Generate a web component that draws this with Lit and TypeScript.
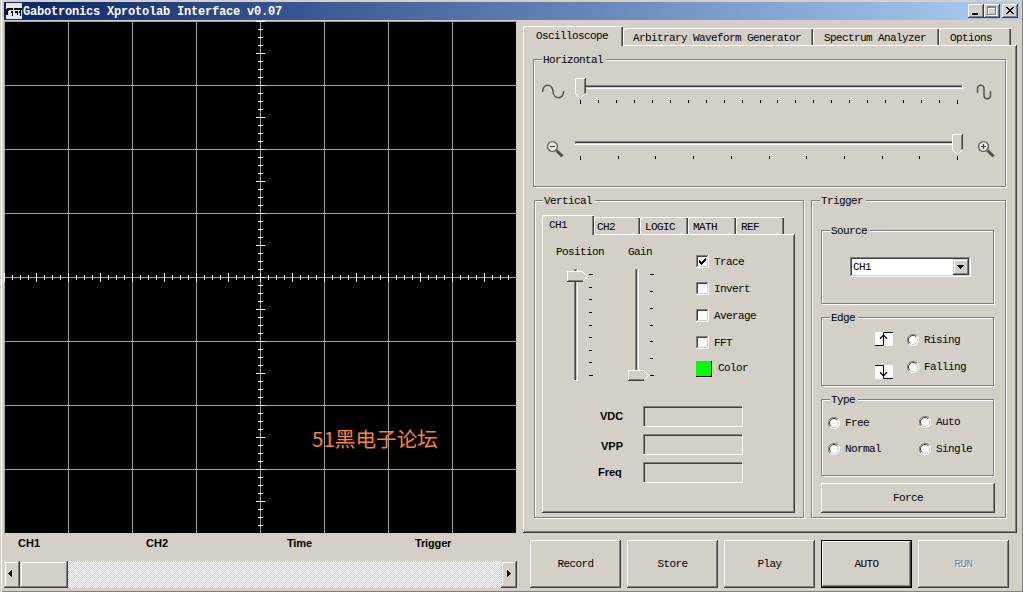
import { LitElement, html, svg, css } from "lit";
import { customElement, property } from "lit/decorators.js";
import { classMap } from "lit/directives/class-map.js";

const base = css`
  * {
    box-sizing: border-box;
  }
  svg {
    display: block;
    flex: none;
  }
  .raised {
    background: #d4d0c8;
    box-shadow: inset -1px -1px #404040, inset 1px 1px #fff, inset -2px -2px #808080;
  }
`;

/* Group box with an etched frame and a caption resting on its top edge. */
@customElement("group-box")
class GroupBox extends LitElement {
  @property() caption = "";
  static styles = css`
    :host {
      display: block;
      box-sizing: border-box;
      position: relative;
      border: 1px solid #808080;
      box-shadow: 1px 1px #fff, inset 1px 1px #fff;
    }
    .caption {
      position: absolute;
      top: -6px;
      left: 8px;
      padding: 0 3px 0 1px;
      background: #d4d0c8;
      line-height: 12px;
    }
  `;
  render() {
    return html`<span class="caption">${this.caption}</span><slot></slot>`;
  }
}

/* Trackbar, horizontal or vertical, with tick marks beside the groove. */
@customElement("track-bar")
class TrackBar extends LitElement {
  @property({ type: Boolean }) vertical = false;
  @property({ type: Number }) length = 388;
  @property({ type: Number }) ticks = 11;
  @property({ type: Number }) at = 0;
  static styles = css`
    :host {
      display: block;
      flex: none;
    }
    svg {
      display: block;
    }
  `;
  render() {
    const n = this.ticks - 1;
    const L = this.length;
    const marks = Array.from({ length: n + 1 }, (_, i) => {
      const end = i === 0 || i === n;
      const size = end ? 4 : 3;
      if (this.vertical) {
        const p = 6 + Math.round((i * (L - 12)) / n);
        return svg`<rect x=${end ? 22 : 22} y=${p} width=${size} height="1"></rect>`;
      }
      const p = 5 + Math.round((i * (L - 11)) / n);
      return svg`<rect x=${p} y="22" width="1" height=${size}></rect>`;
    });
    const t = Math.round(this.at * (L - 11));
    if (this.vertical) {
      return html`<svg width="27" height=${L} shape-rendering="crispEdges">
        <rect x="7" y="1" width="3" height="1" fill="#808080"></rect>
        <rect x="7" y="1" width="1" height=${L - 2} fill="#808080"></rect>
        <rect x="8" y="2" width="1" height=${L - 3} fill="#404040"></rect>
        <rect x="10" y="1" width="1" height=${L - 1} fill="#fff"></rect>
        <rect x="7" y=${L - 1} width="4" height="1" fill="#fff"></rect>
        <g>${marks}</g>
        <g transform="translate(0 ${t})">
          <path d="M0 0H16L21 5.500L16 11H0Z" fill="#d4d0c8"></path>
          <path d="M.5 10V.5H15.500L20.500 5.500L16 10" fill="none" stroke="#fff"></path>
          <path d="M1 9.500H16" stroke="#808080"></path>
          <path d="M0 10.500H16" stroke="#404040"></path>
        </g>
      </svg>`;
    }
    return html`<svg width=${L} height="27" shape-rendering="crispEdges">
      <rect x="0" y="7" width=${L - 1} height="1" fill="#808080"></rect>
      <rect x="0" y="8" width="1" height="2" fill="#808080"></rect>
      <rect x="1" y="8" width=${L - 2} height="1" fill="#404040"></rect>
      <rect x="0" y="10" width=${L} height="1" fill="#fff"></rect>
      <rect x=${L - 1} y="7" width="1" height="4" fill="#fff"></rect>
      <g>${marks}</g>
      <g transform="translate(${t} 0)">
        <path d="M0 0H11V16L5.500 21L0 16Z" fill="#d4d0c8"></path>
        <path d="M10 .5H.5V15.500L5.500 20.500L10 16" fill="none" stroke="#fff"></path>
        <path d="M9.500 1V16" stroke="#808080"></path>
        <path d="M10.500 0V15" stroke="#404040"></path>
      </g>
    </svg>`;
  }
}

@customElement("radio-option")
class RadioOption extends LitElement {
  static styles = [
    base,
    css`
      :host {
        display: flex;
        align-items: center;
        gap: 5px;
        height: 12px;
        line-height: 12px;
      }
    `,
  ];
  render() {
    return html`<svg width="12" height="12" viewBox="0 0 12 12">
        <circle cx="6" cy="6" r="5" fill="#fff"></circle>
        <path d="M2 10A5.500 5.500 0 0 1 10 2" fill="none" stroke="#808080"></path>
        <path d="M2.800 9.200A4.500 4.500 0 0 1 9.200 2.800" fill="none" stroke="#404040"></path>
        <path d="M2.800 9.200A4.500 4.500 0 0 0 9.200 2.800" fill="none" stroke="#d4d0c8"></path>
        <path d="M2 10A5.500 5.500 0 0 0 10 2" fill="none" stroke="#fff"></path></svg
      ><slot></slot>`;
  }
}

@customElement("check-option")
class CheckOption extends LitElement {
  @property({ type: Boolean }) checked = false;
  static styles = [
    base,
    css`
      :host {
        display: flex;
        align-items: center;
        gap: 5px;
        height: 13px;
        line-height: 12px;
      }
      .box {
        width: 13px;
        height: 13px;
        background: #fff;
        box-shadow: inset -1px -1px #fff, inset 1px 1px #808080, inset -2px -2px #d4d0c8,
          inset 2px 2px #404040;
      }
    `,
  ];
  render() {
    return html`<span class="box"
        >${this.checked
          ? html`<svg width="13" height="13" shape-rendering="crispEdges">
              <path
                d="M3 5h1v3h-1zM4 6h1v3h-1zM5 7h1v3h-1zM6 6h1v3h-1zM7 5h1v3h-1zM8 4h1v3h-1zM9 3h1v3h-1z"
              ></path>
            </svg>`
          : ""}</span
      ><slot></slot>`;
  }
}

/* Oscilloscope screen: 8 by 8 divisions of 64px with graduated centre axes. */
@customElement("scope-screen")
class ScopeScreen extends LitElement {
  static styles = css`
    :host {
      display: block;
      height: 513px;
    }
    svg {
      display: block;
    }
    .mark {
      font: 20.600px "Noto Sans CJK SC", sans-serif;
      letter-spacing: 0;
      fill: #f5853a;
    }
  `;
  render() {
    const grid = [];
    for (let i = 0; i < 8; i++) {
      grid.push(svg`<rect x=${i * 64} y="0" width="1" height="513"></rect>
        <rect x="0" y=${i * 64} width="513" height="1"></rect>`);
    }
    const ticks = [];
    for (let i = 0; i < 64; i++) {
      const r = i % 4 === 0 ? 4 : 2;
      ticks.push(svg`<rect x=${i * 8} y=${256 - r} width="1" height=${2 * r + 1}></rect>
        <rect x=${256 - r} y=${i * 8} width=${2 * r + 1} height="1"></rect>`);
    }
    return html`<svg width="513" height="513">
      <rect width="512" height="512"></rect>
      <g fill="#a0a0a0" shape-rendering="crispEdges">${grid}</g>
      <g fill="#fff" shape-rendering="crispEdges">${ticks}</g>
      <text class="mark" x="308" y="426">51黑电子论坛</text>
    </svg>`;
  }
}

@customElement("app-root")
class AppRoot extends LitElement {
  static styles = [
    base,
    css`
      :host {
        display: block;
        width: 1023px;
        height: 592px;
        overflow: hidden;
        background: #d4d0c8;
        color: #000;
        font: 11px/12px "Liberation Mono", monospace;
        letter-spacing: -0.600px;
        white-space: nowrap;
      }
      .window {
        height: 592px;
        padding: 2px 3px 0 4px;
        box-shadow: inset 1px 0 #d4d0c8, inset 2px 0 #fff, inset -1px -1px #808080;
      }
      .title {
        display: flex;
        align-items: center;
        height: 18px;
        padding: 0 2px;
        background: linear-gradient(90deg, #0a246a, #a6caf0 97%);
        color: #fff;
        font-size: 12px;
        font-weight: bold;
        letter-spacing: -0.200px;
      }
      .name {
        flex: 1;
        padding: 1px 0 0 1px;
      }
      .sys {
        width: 16px;
        height: 14px;
      }
      .close {
        margin-left: 2px;
      }
      .main {
        display: flex;
        gap: 6px;
      }
      .left {
        width: 513px;
        padding-top: 1px;
      }
      .labels {
        display: grid;
        grid-template-columns: repeat(4, 128px);
        padding-top: 3px;
        height: 27px;
      }
      .bold {
        font: bold 11px/12px "Liberation Sans", sans-serif;
        letter-spacing: 0;
      }
      .labels span {
        padding-left: 14px;
      }
      .labels .late {
        padding-left: 27px;
        letter-spacing: -0.150px;
      }
      .scroll {
        display: flex;
        justify-content: space-between;
        height: 27px;
        background: repeating-conic-gradient(#fff 0 25%, #d4d0c8 0 50%) 0 0 / 2px 2px;
      }
      .pair {
        display: flex;
      }
      .key {
        width: 16px;
        height: 27px;
        background: #d4d0c8;
        box-shadow: inset -1px -1px #404040, inset 1px 1px #d4d0c8, inset -2px -2px #808080,
          inset 2px 2px #fff;
      }
      .thumb {
        width: 48px;
      }
      .right {
        width: 494px;
        padding-top: 6px;
      }
      .tabs {
        display: flex;
        align-items: flex-end;
        height: 19px;
      }
      .tab {
        height: 17px;
        padding: 4px 0 0 10px;
        border-radius: 2px 0 0 0;
        background: #d4d0c8;
        box-shadow: inset 1px 1px #fff, inset -1px 0 #404040, inset -2px 0 #808080;
      }
      .tab:nth-child(n + 3) {
        padding-left: 11px;
      }
      .tab.on {
        position: relative;
        height: 20px;
        margin-bottom: -1px;
        padding: 4px 0 0 13px;
      }
      .panel {
        box-shadow: inset -1px -1px #404040, inset 1px 1px #fff, inset -2px -2px #808080;
      }
      .outer {
        height: 488px;
        padding: 14px 0 0 10px;
      }
      .horizontal {
        width: 473px;
        height: 128px;
        padding: 18px 0 0 8px;
      }
      .hrow {
        display: flex;
      }
      .hrow + .hrow {
        margin-top: 29px;
      }
      .hrow track-bar {
        margin: 0 13px 0 9px;
      }
      .groups {
        display: flex;
        gap: 7px;
        padding: 13px 0 0 1px;
      }
      .vertical {
        width: 270px;
        height: 318px;
        padding: 14px 0 0 7px;
      }
      .inner .tab {
        padding: 4px 0 0 5px;
      }
      .inner .tab.second {
        padding-left: 3px;
      }
      .inner .tab.on {
        padding: 4px 0 0 7px;
      }
      .channel {
        width: 253px;
        height: 279px;
        padding: 12px 0 0 14px;
      }
      .controls {
        display: flex;
      }
      .knob {
        display: flex;
        flex-direction: column;
        gap: 10px;
      }
      .position {
        width: 72px;
      }
      .position track-bar {
        margin-left: 11px;
      }
      .gain {
        width: 68px;
      }
      .checks {
        display: flex;
        flex-direction: column;
        gap: 14px;
        padding-top: 9px;
      }
      .colour {
        display: flex;
        gap: 6px;
        margin-top: -2px;
      }
      .colour span + span {
        padding-top: 1px;
      }
      .swatch {
        width: 16px;
        height: 16px;
        background: #00ff00;
        box-shadow: inset -1px -1px #000;
      }
      .readouts {
        display: grid;
        grid-template-columns: 45px 100px;
        row-gap: 7px;
        padding: 25px 0 0 42px;
      }
      .field {
        height: 21px;
        box-shadow: inset -1px -1px #fff, inset 1px 1px #808080, inset 2px 2px #404040;
      }
      .readouts .bold {
        padding: 4px 0 0 2px;
      }
      .readouts .vpp {
        padding: 6px 0 0 3px;
      }
      .readouts .freq {
        padding-left: 0;
      }
      .trigger {
        width: 195px;
        height: 318px;
        padding: 29px 0 0 9px;
      }
      .source {
        width: 173px;
        height: 74px;
        padding: 26px 0 0 28px;
      }
      .combo {
        display: flex;
        justify-content: space-between;
        width: 121px;
        height: 20px;
        padding: 2px;
        background: #fff;
        box-shadow: inset -1px -1px #fff, inset 1px 1px #808080, inset -2px -2px #d4d0c8,
          inset 2px 2px #404040;
      }
      .combo span {
        padding: 2px 0 0 1px;
      }
      .drop {
        background: #d4d0c8;
        width: 16px;
        height: 16px;
        box-shadow: inset -1px -1px #404040, inset 1px 1px #d4d0c8, inset -2px -2px #808080,
          inset 2px 2px #fff;
      }
      .edge {
        display: flex;
        gap: 14px;
        width: 173px;
        height: 69px;
        margin-top: 13px;
        padding: 14px 0 0 53px;
      }
      .icons {
        display: flex;
        flex-direction: column;
        gap: 19px;
      }
      .slopes {
        display: flex;
        flex-direction: column;
        gap: 15px;
        padding-top: 2px;
      }
      .type {
        display: grid;
        grid-template-columns: 91px 80px;
        width: 173px;
        height: 77px;
        margin-top: 13px;
        padding: 16px 0 0 6px;
      }
      .modes {
        display: flex;
        flex-direction: column;
        gap: 15px;
      }
      .modes.first {
        gap: 14px;
        padding-top: 1px;
      }
      .button {
        display: flex;
        align-items: center;
        justify-content: center;
      }
      .force {
        width: 174px;
        height: 30px;
        margin-top: 7px;
      }
      .actions {
        display: flex;
        gap: 6px;
        padding: 7px 0 0 7px;
      }
      .action {
        flex: none;
        width: 91px;
        height: 48px;
      }
      .default {
        box-shadow: inset 0 0 0 1px #000, inset -2px -2px #404040, inset 2px 2px #fff,
          inset -3px -3px #808080;
      }
      .off {
        color: #808080;
        text-shadow: 1px 1px #fff;
      }
    `,
  ];

  private tab(label: string, width: number, on = false, second = false) {
    return html`<div class=${classMap({ tab: true, on, second })} style="width:${width}px">${label}</div>`;
  }

  private lens(cx: number, width: number, plus: boolean) {
    return html`<svg width=${width} height="27">
      <path d="M${cx + 4} 16.500L${cx + 10} 22.300" stroke="#55513f" stroke-width="3"></path>
      <circle cx=${cx} cy="12.500" r="4.900" fill="#eeeeea" stroke="#66645a" stroke-width="1.400"></circle>
      <path
        d="M${cx - 2.5} 12.500h5${plus ? `M${cx} 10v5` : ""}"
        stroke="#444"
        stroke-width="1.200"
      ></path>
    </svg>`;
  }

  render() {
    return html`<div class="window">
      <div class="title">
        <svg width="16" height="16" shape-rendering="crispEdges">
          <rect width="16" height="16" fill="#dfe9f6"></rect>
          <path
            d="M1 5h6v2h-4v1h-1v4h-2v-6h1zM5 8h2v5h-1v-3h-1zM8 5h8v2h-8zM9 8h3v4h-1v-2h-2zM14 7h1v6h-1v-3h-1v-2h1z"
          ></path>
        </svg>
        <span class="name">Gabotronics Xprotolab Interface v0.07</span>
        <svg class="sys raised" shape-rendering="crispEdges"><rect x="4" y="9" width="6" height="2"></rect></svg>
        <svg class="sys raised" shape-rendering="crispEdges">
          <path d="M4 3h9v9h-9zM5 5v6h7v-6z" fill="#fff" fill-rule="evenodd"></path>
          <path d="M3 2h9v9h-9zM4 4v6h7v-6z" fill="#808080" fill-rule="evenodd"></path>
        </svg>
        <svg class="sys raised close" shape-rendering="crispEdges">
          <path
            d="M4 3h2v1h1v1h2v-1h1v-1h2v1h-1v1h-1v1h-1v1h1v1h1v1h1v1h-2v-1h-1v-1h-2v1h-1v1h-2v-1h1v-1h1v-1h1v-1h-1v-1h-1v-1h-1z"
          ></path>
        </svg>
      </div>
      <div class="main">
        <div class="left">
          <scope-screen></scope-screen>
          <div class="labels bold">
            <span>CH1</span><span>CH2</span><span class="late">Time</span><span class="late">Trigger</span>
          </div>
          <div class="scroll">
            <div class="pair">
              <svg class="key" shape-rendering="crispEdges">
                <path d="M8 9v7h-1v-1h-1v-1h-1v-1h-1v-1h1v-1h1v-1h1v-1z"></path>
              </svg>
              <div class="key thumb"></div>
            </div>
            <svg class="key" shape-rendering="crispEdges">
              <path d="M6 9v7h1v-1h1v-1h1v-1h1v-1h-1v-1h-1v-1h-1v-1z"></path>
            </svg>
          </div>
        </div>
        <div class="right">
          <div class="tabs">
            ${this.tab("Oscilloscope", 100, true)} ${this.tab("Arbitrary Waveform Generator", 190)}
            ${this.tab("Spectrum Analyzer", 126)} ${this.tab("Options", 72)}
          </div>
          <div class="panel outer">
            <group-box class="horizontal" caption="Horizontal">
              <div class="hrow">
                <svg width="24" height="27">
                  <path
                    d="M.7 14C.5 5 10.500 5 11 13.500C11.500 22 22 22 21.500 13"
                    fill="none"
                    stroke="#55534b"
                    stroke-width="1.500"
                  ></path>
                </svg>
                <track-bar length="388" ticks="22" at="0"></track-bar>
                <svg width="20" height="27">
                  <path
                    d="M1.500 15V11C1.500 6 8 6 8 11V17C8 22 14.500 22 14.500 17V13"
                    fill="none"
                    stroke="#55534b"
                    stroke-width="1.500"
                  ></path>
                </svg>
              </div>
              <div class="hrow">
                ${this.lens(10.5, 24, false)}
                <track-bar length="388" ticks="11" at="1"></track-bar>
                ${this.lens(7.5, 20, true)}
              </div>
            </group-box>
            <div class="groups">
              <group-box class="vertical" caption="Vertical">
                <div class="tabs inner">
                  ${this.tab("CH1", 52, true)} ${this.tab("CH2", 46, false, true)} ${this.tab("LOGIC", 48)}
                  ${this.tab("MATH", 48)} ${this.tab("REF", 48)}
                </div>
                <div class="panel channel">
                  <div class="controls">
                    <div class="knob position">
                      <span>Position</span>
                      <track-bar vertical length="113" ticks="9" at="0.030"></track-bar>
                    </div>
                    <div class="knob gain">
                      <span>Gain</span>
                      <track-bar vertical length="113" ticks="7" at="1"></track-bar>
                    </div>
                    <div class="checks">
                      <check-option checked>Trace</check-option>
                      <check-option>Invert</check-option>
                      <check-option>Average</check-option>
                      <check-option>FFT</check-option>
                      <div class="colour"><span class="swatch"></span><span>Color</span></div>
                    </div>
                  </div>
                  <div class="readouts">
                    <span class="bold">VDC</span><span class="field"></span>
                    <span class="bold vpp">VPP</span><span class="field"></span>
                    <span class="bold freq">Freq</span><span class="field"></span>
                  </div>
                </div>
              </group-box>
              <group-box class="trigger" caption="Trigger">
                <group-box class="source" caption="Source">
                  <div class="combo">
                    <span>CH1</span>
                    <svg class="drop" shape-rendering="crispEdges">
                      <path d="M4 6h7v1h-1v1h-1v1h-1v1h-1v-1h-1v-1h-1v-1h-1z"></path>
                    </svg>
                  </div>
                </group-box>
                <group-box class="edge" caption="Edge">
                  <div class="icons">
                    <svg width="18" height="14" fill="none" stroke="#000">
                      <rect width="18" height="14" fill="#fff" stroke="none"></rect>
                      <path d="M0 13.500H8.500V.5H18"></path>
                      <path d="M5 6.800L8.500 3.200L12 6.800" stroke-width="1.300"></path>
                    </svg>
                    <svg width="18" height="14" fill="none" stroke="#000">
                      <rect width="18" height="14" fill="#fff" stroke="none"></rect>
                      <path d="M0 .5H8.500V13.500H18"></path>
                      <path d="M5 7.200L8.500 10.800L12 7.200" stroke-width="1.300"></path>
                    </svg>
                  </div>
                  <div class="slopes">
                    <radio-option>Rising</radio-option>
                    <radio-option>Falling</radio-option>
                  </div>
                </group-box>
                <group-box class="type" caption="Type">
                  <div class="modes first">
                    <radio-option>Free</radio-option>
                    <radio-option>Normal</radio-option>
                  </div>
                  <div class="modes">
                    <radio-option>Auto</radio-option>
                    <radio-option>Single</radio-option>
                  </div>
                </group-box>
                <div class="button raised force">Force</div>
              </group-box>
            </div>
          </div>
          <div class="actions">
            <div class="button raised action">Record</div>
            <div class="button raised action">Store</div>
            <div class="button raised action">Play</div>
            <div class="button action default">AUTO</div>
            <div class="button raised action off">RUN</div>
          </div>
        </div>
      </div>
    </div>`;
  }
}
